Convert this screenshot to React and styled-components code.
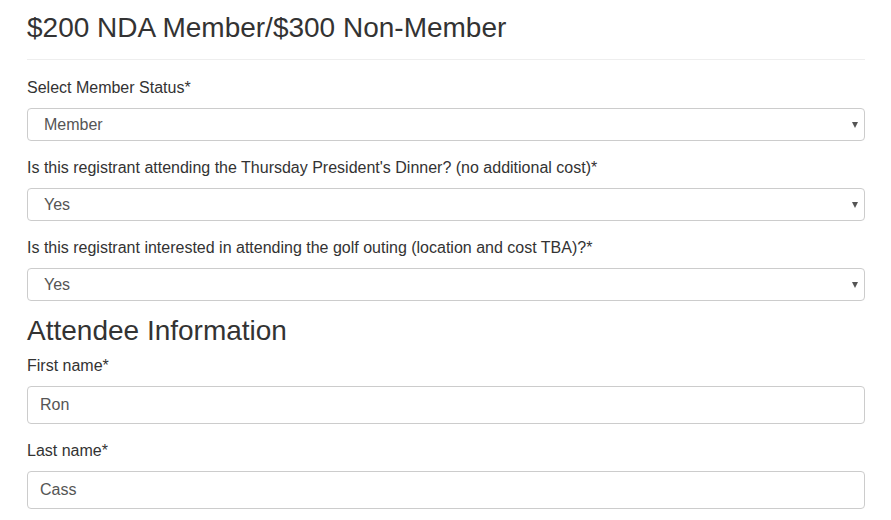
import React from "react";
import styled, { createGlobalStyle } from "styled-components";

const Global = createGlobalStyle`
  html, body { margin: 0; padding: 0; background: #fff; }
  body { font-family: "Liberation Sans", Arial, sans-serif; color: #333; }
  * { box-sizing: border-box; }
`;

const Page = styled.div`
  padding: 0 26px 0 27px;
`;

const Title = styled.h3`
  margin: 13px 0 15px;
  font-size: 28px;
  font-weight: 400;
  line-height: 1.1;
  color: #333;
`;

const Rule = styled.hr`
  margin: 0 0 16px;
  border: 0;
  border-top: 1px solid #eee;
`;

const SectionTitle = styled.h3`
  margin: 0 0 7px;
  font-size: 28px;
  font-weight: 400;
  line-height: 1.1;
  color: #333;
`;

const Group = styled.div`
  margin-bottom: 15px;
`;

const Label = styled.label`
  display: block;
  font-size: 16px;
  line-height: 23px;
  margin-bottom: 9px;
  font-weight: 400;
  color: #333;
`;

const SelectWrap = styled.div`
  position: relative;
`;

const Select = styled.select`
  display: block;
  width: 100%;
  height: 33px;
  padding: 0 16px;
  font-family: inherit;
  font-size: 16px;
  color: #555;
  background: #fff;
  border: 1px solid #ccc;
  border-radius: 4px;
  appearance: none;
  -webkit-appearance: none;
  outline: none;
`;

const Caret = styled.span`
  position: absolute;
  right: 7px;
  top: 14px;
  width: 0;
  height: 0;
  border-left: 3.5px solid transparent;
  border-right: 3.5px solid transparent;
  border-top: 6px solid #555;
  pointer-events: none;
`;

const Input = styled.input`
  display: block;
  width: 100%;
  height: 38px;
  padding: 0 12px;
  font-family: inherit;
  font-size: 16px;
  color: #555;
  background: #fff;
  border: 1px solid #ccc;
  border-radius: 4px;
  outline: none;
`;

function SelectField({ label, value }) {
  return (
    <Group>
      <Label>{label}</Label>
      <SelectWrap>
        <Select defaultValue={value}>
          <option>{value}</option>
        </Select>
        <Caret />
      </SelectWrap>
    </Group>
  );
}

function TextField({ label, value }) {
  return (
    <Group>
      <Label>{label}</Label>
      <Input defaultValue={value} />
    </Group>
  );
}

export default function App() {
  return (
    <Page>
      <Global />
      <Title>$200 NDA Member/$300 Non-Member</Title>
      <Rule />
      <SelectField label="Select Member Status*" value="Member" />
      <SelectField
        label="Is this registrant attending the Thursday President's Dinner? (no additional cost)*"
        value="Yes"
      />
      <SelectField
        label="Is this registrant interested in attending the golf outing (location and cost TBA)?*"
        value="Yes"
      />
      <SectionTitle>Attendee Information</SectionTitle>
      <TextField label="First name*" value="Ron" />
      <TextField label="Last name*" value="Cass" />
    </Page>
  );
}
